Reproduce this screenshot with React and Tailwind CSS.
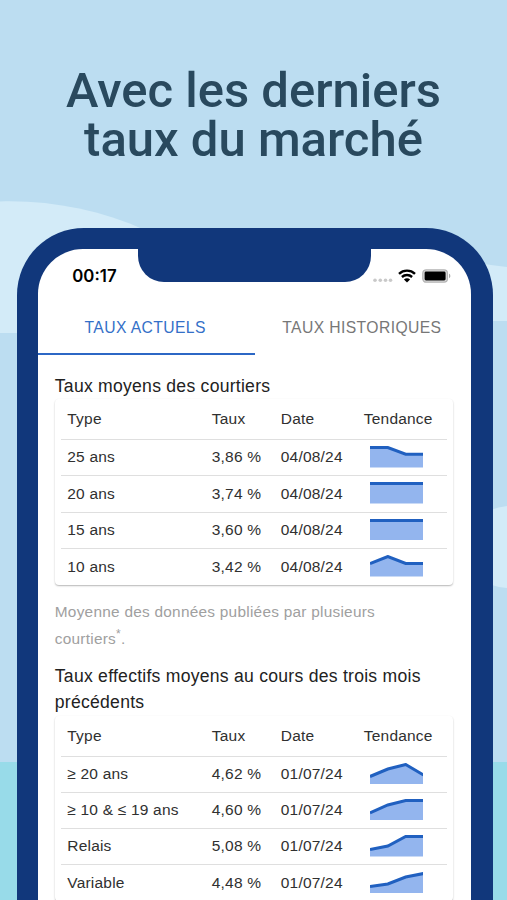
const COURTIERS = [
  { type: "25 ans", taux: "3,86 %", date: "04/08/24", trend: [20, 20, 13.3, 13.3] },
  { type: "20 ans", taux: "3,74 %", date: "04/08/24", trend: [20, 20, 20, 20] },
  { type: "15 ans", taux: "3,60 %", date: "04/08/24", trend: [20, 20, 20, 20] },
  { type: "10 ans", taux: "3,42 %", date: "04/08/24", trend: [13, 20, 13, 13] },
];

const EFFECTIFS = [
  { type: "≥ 20 ans", taux: "4,62 %", date: "01/07/24", trend: [8, 15.5, 20, 9.5] },
  { type: "≥ 10 & ≤ 19 ans", taux: "4,60 %", date: "01/07/24", trend: [7.5, 15.5, 20, 20] },
  { type: "Relais", taux: "5,08 %", date: "01/07/24", trend: [7, 10.5, 20, 20] },
  { type: "Variable", taux: "4,48 %", date: "01/07/24", trend: [7, 9.5, 16.5, 20] },
];

const SPARK_WIDTH = 53.5;
const SPARK_HEIGHT = 21.5;

function Sparkline({ values }) {
  const step = SPARK_WIDTH / (values.length - 1);
  const line = values
    .map((v, i) => `${i * step},${SPARK_HEIGHT - v}`)
    .join(" ");

  return (
    <svg width={SPARK_WIDTH} height={SPARK_HEIGHT} className="block">
      <polygon
        points={`0,${SPARK_HEIGHT} ${line} ${SPARK_WIDTH},${SPARK_HEIGHT}`}
        fill="#93b5ee"
      />
      <polyline points={line} fill="none" stroke="#2060c0" strokeWidth="3" />
    </svg>
  );
}

function RatesTable({ rows }) {
  return (
    <div className="w-[398px] rounded-[4px] bg-white px-1.5 text-[15.5px] tracking-[0.2px] text-[#303030] shadow-[0_1px_1.5px_rgba(0,0,0,0.24),0_1px_3px_rgba(0,0,0,0.06)]">
      <div className="grid h-[41px] grid-cols-[144.5px_69px_83px_1fr] items-center border-b-[1.5px] border-[#dfdfdf] pl-[6.5px]">
        <span>Type</span>
        <span>Taux</span>
        <span>Date</span>
        <span>Tendance</span>
      </div>
      {rows.map((row) => (
        <div
          key={row.type}
          className="grid h-[36.25px] grid-cols-[144.5px_69px_83px_1fr] items-center border-b-[1.5px] border-[#dfdfdf] pb-[1.5px] pl-[6.5px] last:h-[35.75px] last:border-transparent last:pb-0"
        >
          <span>{row.type}</span>
          <span>{row.taux}</span>
          <span>{row.date}</span>
          <div className="pl-1.5">
            <Sparkline values={row.trend} />
          </div>
        </div>
      ))}
    </div>
  );
}

function Background() {
  return (
    <svg
      viewBox="0 0 507 900"
      className="absolute inset-0 h-full w-full"
      aria-hidden="true"
    >
      <rect width="507" height="900" fill="#bcddf1" />
      <path d="M0 201.5C50 200 100 210 145 230V333H0Z" fill="#d3ebf8" />
      <path d="M470 262Q490 265 507 267V321H470Z" fill="#d3ebf8" />
      <path d="M480 515Q492 508 507 506V588Q500 588 492 585H480Z" fill="#d3ebf8" />
      <rect y="762" width="507" height="138" fill="#98dbe9" />
    </svg>
  );
}

function StatusBar() {
  return (
    <div className="flex h-[54px] items-center justify-between pr-[20px] pl-[34.5px]">
      <span className="pt-[2px] font-['Inter',sans-serif] text-[16.8px] font-semibold text-black">
        00:17
      </span>
      <div className="flex items-center">
        <svg width="20" height="14" className="mr-[5px]">
          {[2, 7.3, 12.5, 17.5].map((cx) => (
            <circle key={cx} cx={cx} cy="11.2" r="1.8" fill="#c9c9c9" />
          ))}
        </svg>
        <svg width="18" height="14" viewBox="0 0 18 14" className="mr-[6px]">
          <g fill="none" stroke="#000" strokeWidth="2.4">
            <path d="M1 4.8C5.5.6 12.5.6 17 4.8" />
            <path d="M3.9 8C6.8 5.4 11.2 5.4 14.1 8" />
          </g>
          <path d="M9 13.6L5.9 10.4C7.6 8.9 10.4 8.9 12.1 10.4Z" />
        </svg>
        <svg width="29" height="14" viewBox="0 0 29 14">
          <rect x=".8" y=".8" width="24.6" height="12.4" rx="3.4" fill="#ddd" stroke="#b5b5b5" strokeWidth="1.3" />
          <rect x="2.6" y="2.6" width="21" height="8.8" rx="1.4" />
          <path d="M27 4.8C28.8 5.3 28.8 8.7 27 9.2Z" fill="#aaa" />
        </svg>
      </div>
    </div>
  );
}

function App() {
  return (
    <div className="relative flex h-[900px] w-[507px] flex-col overflow-hidden font-['Liberation_Sans',Arial,sans-serif]">
      <Background />

      <h1 className="relative mt-[66px] h-[161.5px] shrink-0 text-center font-['Roboto',sans-serif] text-[49px] leading-[49px] font-medium text-[#29495e]">
        Avec les derniers
        <br />
        taux du marché
      </h1>

      <div className="relative ml-[16.5px] h-[760px] w-[476px] shrink-0 rounded-t-[67px] bg-[#11377b] px-[21.3px] pt-[21.5px]">
        <div className="absolute top-[21px] left-[121.5px] z-10 h-[33px] w-[233px] rounded-b-[26px] bg-[#11377b]" />

        <div className="h-full rounded-t-[45px] bg-white">
          <StatusBar />

          <div className="flex h-[51.5px] text-[15.7px] tracking-[0.4px]">
            <div className="flex w-1/2 items-center justify-center border-b-[2.5px] border-[#2c67c5] pr-0.5 text-[#3470c8]">
              TAUX ACTUELS
            </div>
            <div className="flex w-1/2 items-center justify-center border-b-[2.5px] border-transparent pr-0.5 text-[#777]">
              TAUX HISTORIQUES
            </div>
          </div>

          <div className="pl-[17px]">
            <h2 className="pt-[18px] text-[17.6px] leading-[26.5px] tracking-[0.25px] text-[#222]">
              Taux moyens des courtiers
            </h2>
            <RatesTable rows={COURTIERS} />

            <p className="mt-[14.5px] w-[380px] text-[15.4px] leading-[26.5px] tracking-[0.25px] text-[#a0a0a0]">
              Moyenne des données publiées par plusieurs courtiers
              <sup className="top-[-6px] text-[12px] leading-none">*</sup>.
            </p>

            <h2 className="mt-[10.5px] w-[390px] text-[17.6px] leading-[26.5px] tracking-[0.25px] text-[#222]">
              Taux effectifs moyens au cours des trois mois précédents
            </h2>
            <RatesTable rows={EFFECTIFS} />
          </div>
        </div>
      </div>
    </div>
  );
}

export default App;
